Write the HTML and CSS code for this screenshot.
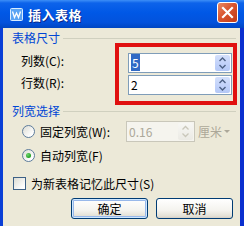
FILE: index.html
```html
<!DOCTYPE html>
<html lang="zh-CN">
<head>
    <meta charset="UTF-8">
    <title>插入表格</title>
    <link rel="stylesheet" href="styles.css">
</head>
<body>
    <div class="window">
        <div class="titlebar">
            <svg class="app-icon" width="13" height="13" viewBox="0 0 13 13">
                <rect x="0.5" y="0.5" width="12" height="12" rx="1" fill="#5aa4f4" stroke="#d8ecff"/>
                <path d="M2.5 3.5 L4.5 9.5 L6.5 5 L8.5 9.5 L10.5 3.5" fill="none" stroke="#fff" stroke-width="1.3"/>
            </svg>
            <span class="title">插入表格</span>
            <div class="close-btn">
                <svg width="19" height="19" viewBox="0 0 19 19">
                    <path d="M5 5 L14 14 M14 5 L5 14" stroke="#fff" stroke-width="2.2" stroke-linecap="square"/>
                </svg>
            </div>
        </div>
        <div class="frame">
            <div class="group-title">
                <span>表格尺寸</span>
                <div class="rule"></div>
            </div>
            <div class="size-body">
                <div class="size-labels">
                    <label>列数(C):</label>
                    <label>行数(R):</label>
                </div>
                <div class="highlight">
                    <div class="spinner">
                        <span class="value"><span class="selected">5</span></span>
                        <div class="spin">
                            <svg width="15" height="16" viewBox="0 0 15 16">
                                <path d="M4.5 6 L7.5 3 L10.5 6 M4.5 10 L7.5 13 L10.5 10" fill="none" stroke="#4d6185" stroke-width="1.4"/>
                            </svg>
                        </div>
                    </div>
                    <div class="spinner">
                        <span class="value">2</span>
                        <div class="spin">
                            <svg width="15" height="16" viewBox="0 0 15 16">
                                <path d="M4.5 6 L7.5 3 L10.5 6 M4.5 10 L7.5 13 L10.5 10" fill="none" stroke="#4d6185" stroke-width="1.4"/>
                            </svg>
                        </div>
                    </div>
                </div>
            </div>

            <div class="group-title">
                <span>列宽选择</span>
                <div class="rule"></div>
            </div>
            <div class="option fixed-row">
                <span class="radio"></span>
                <span class="option-label fixed-label">固定列宽(W):</span>
                <div class="spinner disabled">
                    <span class="value">0.16</span>
                    <div class="spin">
                        <svg width="15" height="17" viewBox="0 0 15 17">
                            <path d="M4.5 6.5 L7.5 3.5 L10.5 6.5 M4.5 10.5 L7.5 13.5 L10.5 10.5" fill="none" stroke="#c9c7ba" stroke-width="1.3"/>
                        </svg>
                    </div>
                </div>
                <span class="unit">厘米<span class="caret"></span></span>
            </div>
            <div class="option auto-row">
                <span class="radio checked"></span>
                <span class="option-label">自动列宽(F)</span>
            </div>

            <div class="option remember-row">
                <span class="checkbox"></span>
                <span class="option-label">为新表格记忆此尺寸(S)</span>
            </div>

            <div class="buttons">
                <button class="default">确定</button>
                <button>取消</button>
            </div>
        </div>
    </div>
</body>
</html>
```

FILE: styles.css
```css
body {
    margin: 0;
    background: #fff;
    font-family: "Noto Sans CJK SC", "DejaVu Sans", sans-serif;
    font-size: 12px;
    color: #000;
}

.window {
    width: 244px;
    height: 226px;
    display: flex;
    flex-direction: column;
}

.titlebar {
    height: 28px;
    display: flex;
    align-items: center;
    padding: 0 6px 0 10px;
    background: linear-gradient(to bottom, #3d8ff7 0, #0d63ea 3px, #0058e6 45%, #0352dc 80%, #0046c2 100%);
}

.app-icon {
    flex: none;
    margin-right: 5px;
}

.title {
    flex: 1;
    color: #fff;
    font-weight: bold;
    font-size: 13px;
    letter-spacing: 0.5px;
    text-shadow: 1px 1px 0 #0a2a8a;
}

.close-btn {
    width: 19px;
    height: 19px;
    margin-top: -3px;
    border: 1px solid #fff;
    border-radius: 3px;
    background: linear-gradient(135deg, #e98a66 0, #d9552f 45%, #c23c17 100%);
}

.close-btn svg {
    display: block;
}

.frame {
    flex: 1;
    background: #ece9d8;
    border-left: 3px solid #0a3fd6;
    border-right: 4px solid #0a2fcf;
    padding-top: 5px;
}

/* group box headers */
.group-title {
    display: flex;
    align-items: center;
    height: 10px;
    margin: 0 4px 0 9px;
    color: #0046d5;
}

.group-title span {
    line-height: 12px;
}

.group-title .rule {
    flex: 1;
    height: 1px;
    margin-left: 3px;
    background: #d0d0bf;
}

/* size section */
.size-body {
    display: flex;
    padding-left: 18px;
    margin-bottom: 1px;
}

.size-labels {
    width: 94px;
    display: flex;
    flex-direction: column;
    gap: 2px;
    padding-top: 8px;
}

.size-labels label {
    line-height: 20px;
}

.highlight {
    border: 4px solid #e01010;
    padding: 6px 1px 6px 9px;
    display: flex;
    flex-direction: column;
    gap: 2px;
}

.spinner {
    width: 102px;
    height: 18px;
    border: 1px solid #7f9db9;
    background: #fff;
    display: flex;
    align-items: center;
}

.spinner .value {
    flex: 1;
    padding-left: 2px;
    line-height: 14px;
}

.selected {
    background: #316ac5;
    color: #fff;
    padding: 0 1px;
}

.spin {
    width: 15px;
    height: 16px;
    margin-right: 1px;
    border-radius: 2px;
    background: linear-gradient(to bottom, #d4e0fb 0, #c3d3fa 50%, #b4c8f6 100%);
}

.spin svg {
    display: block;
}

/* column width section */
.option {
    display: flex;
    align-items: center;
}

.fixed-row {
    margin-top: 5px;
    padding-left: 19px;
    height: 21px;
}

.auto-row {
    margin-top: 7px;
    padding-left: 19px;
    height: 13px;
}

.remember-row {
    margin-top: 15px;
    padding-left: 10px;
    height: 13px;
}

.option-label {
    margin-left: 5px;
    line-height: 14px;
}

.fixed-label {
    width: 86px;
}

.radio {
    width: 11px;
    height: 11px;
    border: 1px solid #5d7c9c;
    border-radius: 50%;
    background: linear-gradient(135deg, #dcdcd3 0, #fff 80%);
    display: flex;
    align-items: center;
    justify-content: center;
}

.radio.checked::after {
    content: "";
    width: 5px;
    height: 5px;
    border-radius: 50%;
    background: radial-gradient(circle at 35% 35%, #6fd46f 0, #21a121 70%);
}

.checkbox {
    width: 11px;
    height: 11px;
    border: 1px solid #3d6186;
    background: linear-gradient(135deg, #dcdcd3 0, #fff 85%);
}

.spinner.disabled {
    width: 67px;
    height: 19px;
    border-color: #c9c7ba;
    background: #f5f4ee;
    color: #aca899;
}

.spinner.disabled .spin {
    width: 15px;
    height: 17px;
    background: linear-gradient(to bottom, #f7f7f4, #ebeae4);
    border: 0;
}

.unit {
    margin-left: 3px;
    color: #aca899;
    display: flex;
    align-items: center;
    line-height: 14px;
}

.caret {
    width: 0;
    height: 0;
    margin-left: 2px;
    border-left: 3px solid transparent;
    border-right: 3px solid transparent;
    border-top: 3px solid #aca899;
}

/* dialog buttons */
.buttons {
    display: flex;
    justify-content: flex-end;
    gap: 8px;
    margin-top: 8px;
    padding-right: 7px;
}

.buttons button {
    width: 77px;
    height: 21px;
    padding: 0;
    font-family: inherit;
    font-size: 12px;
    color: #000;
    border: 1px solid #003c74;
    border-radius: 3px;
    background: linear-gradient(to bottom, #fff 0, #f4f3ee 60%, #e3e0d6 90%, #d6d0c5 100%);
}

.buttons button.default {
    box-shadow: inset 0 0 0 1px #cee7ff, inset 0 0 0 2px #98b8ea;
}
```
